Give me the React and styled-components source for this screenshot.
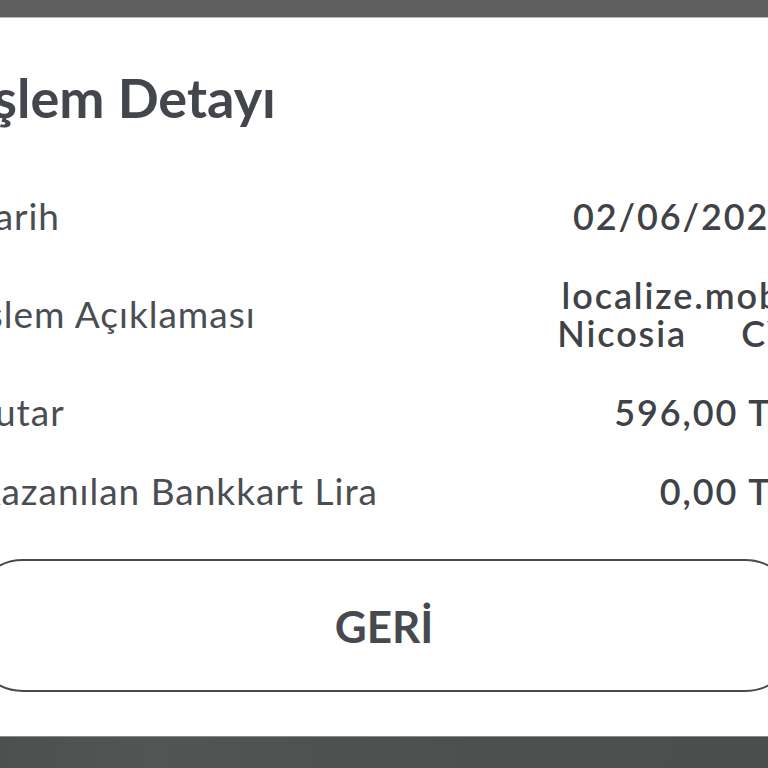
import React from "react";
import styled, { createGlobalStyle } from "styled-components";

const GlobalStyle = createGlobalStyle`
  html, body {
    margin: 0;
    padding: 0;
    background: #ffffff;
    overflow: hidden;
  }
  body {
    font-family: Lato, "Open Sans", "Liberation Sans", sans-serif;
    color: #43474c;
  }
`;

const Screen = styled.div`
  display: flex;
  flex-direction: column;
  width: 768px;
  height: 768px;
  overflow: hidden;
`;

const TopShade = styled.div`
  flex: 0 0 17px;
  background: #5f5f5f;
  border-bottom: 1px solid #b4b4b4;
`;

const Sheet = styled.div`
  flex: 1;
  background: #ffffff;
  overflow: hidden;
`;

const SheetInner = styled.div`
  width: 826px;
  margin-left: -29px;
  display: flex;
  flex-direction: column;
`;

const Title = styled.h1`
  margin: 48px 0 0 7px;
  font-size: 54px;
  line-height: 64px;
  font-weight: 700;
  color: #43474c;
`;

const Rows = styled.div`
  display: flex;
  flex-direction: column;
  gap: 41px;
  margin: 67px 0 0;
  padding: 0 5px 0 5px;
`;

const Row = styled.div`
  display: flex;
  justify-content: space-between;
  align-items: center;
`;

const Label = styled.span`
  font-size: 37px;
  line-height: 38px;
  font-weight: 400;
  letter-spacing: 1px;
  color: #4a4e53;
  white-space: nowrap;
`;

const Value = styled.span`
  font-size: 36px;
  line-height: 38px;
  font-weight: 600;
  letter-spacing: 1.9px;
  color: #3f4348;
  text-align: right;
  white-space: pre;
`;

const BackButton = styled.button`
  margin-top: 49px;
  height: 133px;
  width: 100%;
  background: #ffffff;
  border: 2px solid #474a4f;
  border-radius: 52px;
  font-family: Lato, "Open Sans", "Liberation Sans", sans-serif;
  font-size: 44px;
  font-weight: 700;
  color: #464a4f;
  cursor: pointer;
`;

const BottomShade = styled.div`
  flex: 0 0 31px;
  border-top: 1px solid #8a8a8a;
  background: linear-gradient(
    90deg,
    #4e4f4f 0%,
    #535454 20%,
    #4f5050 45%,
    #4c4d4d 100%
  );
`;

const details = [
  { label: "Tarih", value: "02/06/2021" },
  { label: "İşlem Açıklaması", value: "localize.mobi\nNicosia     CY" },
  { label: "Tutar", value: "596,00 TL" },
  { label: "Kazanılan Bankkart Lira", value: "0,00 TL" },
];

export default function App() {
  return (
    <>
      <GlobalStyle />
      <Screen>
        <TopShade />
        <Sheet>
          <SheetInner>
            <Title>İşlem Detayı</Title>
            <Rows>
              {details.map((d) => (
                <Row key={d.label}>
                  <Label>{d.label}</Label>
                  <Value>{d.value}</Value>
                </Row>
              ))}
            </Rows>
            <BackButton>GERİ</BackButton>
          </SheetInner>
        </Sheet>
        <BottomShade />
      </Screen>
    </>
  );
}
